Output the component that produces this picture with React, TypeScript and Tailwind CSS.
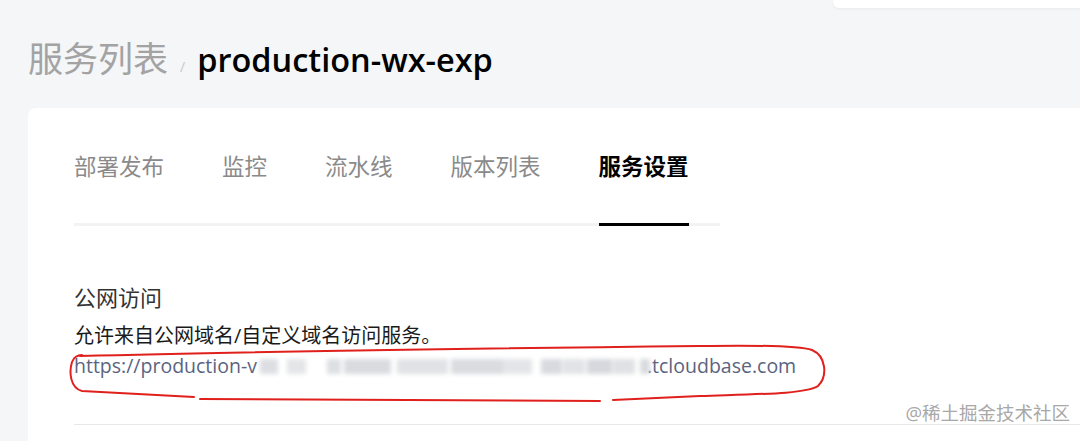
import React from 'react'

const tabs = ['部署发布', '监控', '流水线', '版本列表', '服务设置']
const activeTab = '服务设置'

// masked part of the domain: [offset from previous block, width, colour]
const masked: [number, number, string][] = [
  [3, 18, '#dcdee2'],
  [9, 19, '#e3e5e8'],
  [21, 14, '#dddfe3'],
  [3, 47, '#d9dbdf'],
  [6, 51, '#e0e2e5'],
  [3, 52, '#dadce0'],
  [0, 29, '#e4e5e8'],
  [9, 21, '#d8dadf'],
  [1, 22, '#e1e3e6'],
  [2, 25, '#d6d8dd'],
  [1, 22, '#dfe1e4'],
  [5, 10, '#d9dbdf'],
]

function Scribble() {
  // hand-drawn red ring around the URL
  return (
    <svg
      className="pointer-events-none absolute left-0 top-0"
      width="1080"
      height="441"
      viewBox="0 0 1080 441"
      fill="none"
    >
      <g stroke="#e0201c" strokeWidth="2" strokeLinecap="round">
        <path d="M80 356 C 260 351, 520 348, 700 346 C 760 345, 800 346, 812 350 C 826 356, 828 376, 818 386 C 806 394, 760 394, 700 396 L 613 400" />
        <path d="M600 401 L 200 399" />
        <path d="M194 397 L 82 391 C 70 388, 69 372, 72 362 C 74 357, 78 355, 82 355" />
      </g>
    </svg>
  )
}

export default function App() {
  return (
    <div className="relative h-[441px] w-[1080px] overflow-hidden bg-[#f5f6f8] font-['Open_Sans','Noto_Sans_CJK_SC',sans-serif]">
      <div className="flex justify-end">
        <div className="h-[8px] w-[247px] rounded-bl-md bg-white shadow-[0_1px_3px_rgba(0,0,0,0.06)]" />
      </div>

      <div className="flex h-[100px] items-center pl-[28px] pt-[2px]">
        <div className="flex items-baseline leading-none">
          <span className="text-[35px] text-[#a3a3a3]">服务列表</span>
          <span className="mx-[12px] text-[14px] text-[#c8c8c8]">/</span>
          <span className="text-[32.5px] font-semibold text-black">production-wx-exp</span>
        </div>
      </div>

      <div className="ml-[28px] h-[400px] rounded-tl-lg bg-white pl-[46px] pt-[48px]">
        <div className="flex w-[646px] items-end gap-[58px] border-b-[3px] border-[#f3f3f3]">
          {tabs.map((tab) => (
            <div
              key={tab}
              className={`-mb-[3px] border-b-[3px] pb-[44px] text-[22.5px] leading-none ${
                tab === activeTab
                  ? 'border-black font-bold text-black'
                  : 'border-transparent text-[#8a8a8a]'
              }`}
            >
              {tab}
            </div>
          ))}
        </div>

        <p className="mt-[60px] text-[22px] leading-none text-[#333]">公网访问</p>
        <p className="mt-[18px] text-[20px] leading-none text-[#1a1a1a]">
          允许来自公网域名/自定义域名访问服务。
        </p>
        <div className="mt-[10px] flex items-center whitespace-nowrap text-[19.5px] leading-none text-[#5a6480]">
          <span>https://production-v</span>
          <div className="flex h-[19px] w-[390px] items-center pt-[3px] blur-[2px]">
            {masked.map(([gap, width, color], i) => (
              <div
                key={i}
                className="h-[15px] shrink-0"
                style={{ marginLeft: gap, width, backgroundColor: color }}
              />
            ))}
          </div>
          <span>.tcloudbase.com</span>
        </div>

        <div className="mt-[49px] h-px bg-[#e8e8e8]" />
      </div>

      <Scribble />

      <span className="absolute bottom-[19px] right-[10px] text-[18.5px] leading-none text-[#a8a8a8] [text-shadow:0_0_2px_#fff]">
        @稀土掘金技术社区
      </span>
    </div>
  )
}
